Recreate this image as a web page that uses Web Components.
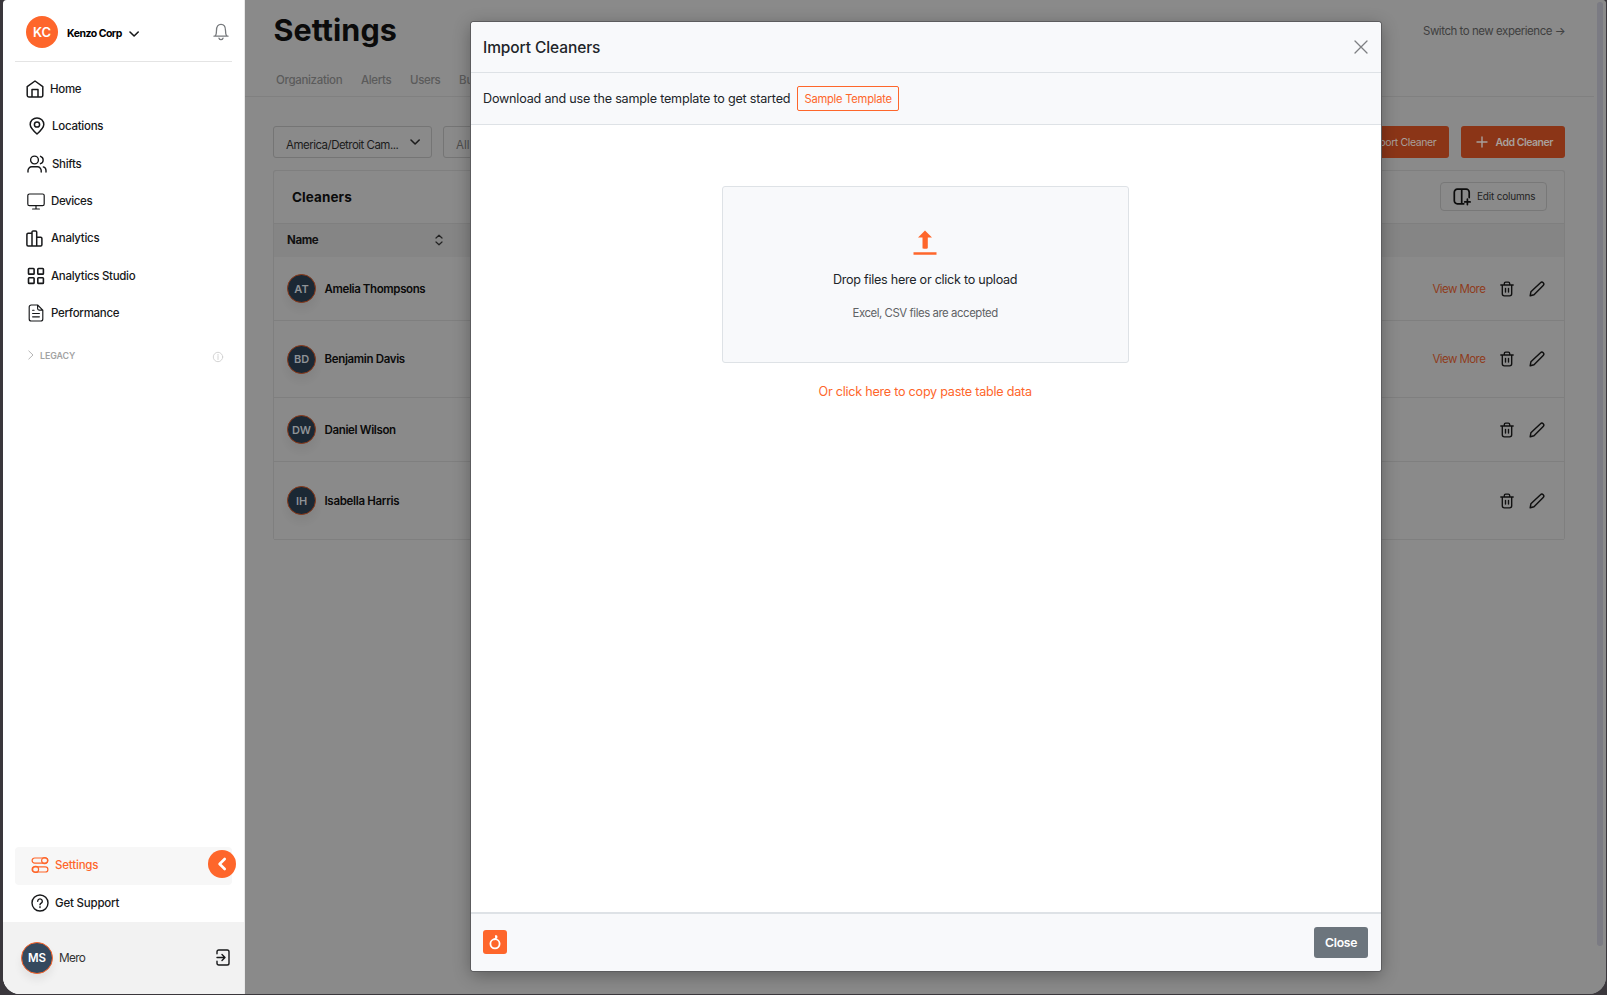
<!DOCTYPE html>
<html lang="en">
<head>
<meta charset="utf-8">
<title>Settings – Cleaners</title>
<style>
html,body{margin:0;height:100%;overflow:hidden;background:#3a373c}
body{font-family:Inter,"Liberation Sans",sans-serif;color:#17181a;font-size:11.500px}
</style>
</head>
<body>
<app-window>
  <side-bar slot="side"></side-bar>
  <settings-page></settings-page>
  <import-dialog slot="dialog"></import-dialog>
</app-window>
<script>
const define = (name, html, setup) => customElements.define(name, class extends HTMLElement {
  connectedCallback() {
    if (this.shadowRoot) return;
    const root = this.attachShadow({ mode: 'open' });
    const t = document.createElement('template');
    t.innerHTML = typeof html === 'function' ? html(this) : html;
    root.append(t.content.cloneNode(true));
    if (setup) setup(this, root);
  }
});

const ICONS = {
  home: [18,18,'<path d="M1.2 6.6 9 1l7.8 5.6v8.7a1.6 1.6 0 0 1-1.6 1.6H2.8a1.6 1.6 0 0 1-1.6-1.6zM6 16.7V9.6h6v7.1"/>',1.5],
  pin: [16,18,'<path d="M8 17C4.200 13.600 1.200 10.900 1.200 7.500a6.800 6.600 0 0 1 13.600 0C14.800 10.900 11.800 13.600 8 17z"/><circle cx="8" cy="7.500" r="2.600"/>',1.5],
  users: [20,18,'<circle cx="7.500" cy="5" r="3.900"/><path d="M1 17v-1.500a3.700 3.700 0 0 1 3.700-3.700h5.800a3.700 3.700 0 0 1 3.700 3.700V17M13.500 1.300a3.900 3.900 0 0 1 0 7.400M16.300 11.900a3.600 3.600 0 0 1 2.700 3.500V17"/>',1.4],
  monitor: [18,17,'<rect x=".8" y="1" width="16.400" height="11.600" rx="1.600"/><path d="M9 12.800v3M5.600 16h6.800"/>',1.2],
  bars: [17,17,'<path d="M.9 4.500c0-.8.5-1.200 1.200-1.200H6v12.600H2.100c-.7 0-1.200-.5-1.200-1.200zM6 2.100C6 1.300 6.500.9 7.200.9h2.300c.8 0 1.200.4 1.200 1.200v13.800H6zM10.700 7.200h4c.7 0 1.200.4 1.200 1.200v6.300c0 .7-.5 1.200-1.200 1.200h-4z"/>',1.5],
  grid: [18,18,'<rect x="1.500" y="1.500" width="5.600" height="5.600" rx=".7"/><rect x="10.800" y="1.500" width="5.600" height="5.600" rx=".7"/><rect x="1.500" y="10.800" width="5.600" height="5.600" rx=".7"/><rect x="10.800" y="10.800" width="5.600" height="5.600" rx=".7"/>',1.6],
  doc: [16,18,'<path d="M9.600 1H3.200A2 2 0 0 0 1.200 3v12a2 2 0 0 0 2 2h9.600a2 2 0 0 0 2-2V6.100zM9.600 1v3.600c0 .9.600 1.500 1.500 1.500h3.700M4.600 6.200h1.500M4.600 9.500h6.800M4.600 12.800h6.800"/>',1.15],
  bell: [16,18,'<path d="M1 13.200h14M2.300 13c1-1.300 1.200-3.400 1.200-5.600C3.500 3.500 5.200 1.400 8 1.400s4.500 2.100 4.500 6c0 2.200.2 4.300 1.200 5.600M6 15.200a2.100 2.100 0 0 0 4 0"/>',1.3],
  down: [12,8,'<path d="M2 2l4.100 4L10.200 2"/>',1.6],
  right: [8,10,'<path d="M1.800 1 6 5 1.800 9"/>',1],
  left: [10,14,'<path d="M7.700 2 2.600 7l5.100 5"/>',2.600],
  info: [12,12,'<circle cx="6" cy="6" r="4.700"/><path d="M6 5.300v3.200M6 3.400v.9"/>',.9],
  toggles: [18,18,'<rect x="1.100" y="2" width="15.800" height="5.200" rx="2.600"/><circle cx="13.600" cy="4.600" r="3"/><rect x="1.100" y="10.800" width="15.800" height="5.200" rx="2.600"/><circle cx="4.600" cy="13.400" r="3"/>',1.2],
  help: [18,18,'<circle cx="9" cy="9" r="8"/><path d="M6.700 7.200a2.300 2.300 0 1 1 3.500 2c-.8.5-1.200.8-1.200 1.500M9 12.700v.9"/>',1.4],
  logout: [14,17,'<path d="M1 4.700V2.800C1 1.700 1.700 1 2.800 1h8.400c1.100 0 1.800.7 1.800 1.800v11.400c0 1.100-.7 1.800-1.800 1.800H2.800C1.700 16 1 15.300 1 14.200v-1.900M1 8.500h7.800M6 5.500l3 3-3 3"/>',1.4],
  sort: [8,12,'<path d="M1 4 4 1.200 7 4M1 8l3 2.800L7 8"/>',1.2],
  plus: [12,12,'<path d="M6 1v10M1 6h10"/>',1.4],
  columns: [18,18,'<path d="M16.200 9.600V4.200a3 3 0 0 0-3-3H4.300a3 3 0 0 0-3 3v8.600a3 3 0 0 0 3 3h6.500M8.700 1.200v14.600M14.400 11.200v5.400M11.700 13.900h5.400"/>',1.7],
  trash: [14,16,'<path d="M.8 4h12.400M4.300 3.800V2.600c0-1 .5-1.500 1.400-1.500h2.600c.9 0 1.400.5 1.400 1.500v1.200M2.300 4.200v8.600c0 1.400.7 2.100 2.100 2.100h5.200c1.400 0 2.100-.7 2.100-2.100V4.200M5.500 7.300v3.800M8.500 7.300v3.800"/>',1.35],
  pencil: [16,16,'<path d="M1.200 14.700l.7-3.900L11.500 1.700a1.900 1.900 0 0 1 2.700 2.700L5 13.700z"/>',1.45],
  close: [14,14,'<path d="M1 1l12 12M13 1 1 13"/>',1.3],
  upload: [24,26,'<path d="M12 .4 19 7.400h-4.200v10.100c0 .8-.5 1.200-1.200 1.200h-2.900c-.8 0-1.200-.4-1.200-1.200V7.400H5zM.5 22.300h23v2.500H.5z" fill="currentColor" stroke="none"/>',1],
  mark: [24,24,'<circle cx="12" cy="13.800" r="4.600"/><path d="M11.200 9.300c1.700-.4 2.300-1.600 1.600-3.300M13.500 7.500v-1.200"/>',1.8],
};

define('ui-icon', el => {
  const [w, h, d, s] = ICONS[el.getAttribute('name')];
  return `<style>:host{display:block;flex:none;width:${w}px;height:${h}px}svg{display:block}</style>
  <svg width="${w}" height="${h}" viewBox="0 0 ${w} ${h}" fill="none" stroke="currentColor" stroke-width="${s}" stroke-linecap="round" stroke-linejoin="round">${d}</svg>`;
});

/* A single line of text whose tracking is adjusted so that it spans the width in "w". */
define('fit-text', '<style>:host{display:block;flex:none;white-space:nowrap}span{display:inline-block}</style><span><slot></slot></span>', (el, root) => {
  const s = root.querySelector('span'), w = +el.getAttribute('w'), n = el.textContent.length;
  if (!w) return;
  const gap = (w + .3 - s.getBoundingClientRect().width) / n;
  s.style.letterSpacing = gap.toFixed(3) + 'px';
  el.style.width = w + 'px';
});

define('user-avatar', `<style>:host{display:grid;place-items:center;box-sizing:border-box;flex:none;width:var(--d,32px);height:var(--d,32px);border-radius:50%;background:var(--bg,#34495e);border:var(--b,1px solid #fe662b);color:var(--fg,#fff);font-size:var(--fs,12px);font-weight:600;box-shadow:var(--sh,none)}</style><slot></slot>`);

define('nav-item', el => `<style>:host{display:flex;align-items:center;height:37.35px;font-weight:500;font-size:11.500px}
  .i{width:${el.getAttribute('tx')}px;box-sizing:border-box;padding-left:${el.getAttribute('ix')}px;flex:none}</style>
  <div class="i"><ui-icon name="${el.getAttribute('icon')}"></ui-icon></div><fit-text w="${el.getAttribute('w')}">${el.getAttribute('label')}</fit-text>`);

define('side-bar', `<style>
:host{display:flex;flex-direction:column;width:242px;height:994px;background:#fff;box-shadow:inset -1px 0 #e8e8e8}
.top{display:flex;align-items:center;margin:0 13px 0 12px;border-bottom:1px solid #e4e4e4;box-sizing:border-box;height:62px;padding:2px 3px 0 11px}
.top .n{margin:3px 6px 0 9px;font-size:10.500px;font-weight:700;color:#000}
.top .c{margin-top:5px}.top .b{margin:0 0 0 auto;color:#777a7d}
nav{padding-top:8.400px}
.leg{display:flex;align-items:center;height:20px;margin:13.500px 21px 0 24px;color:#a3a3a3}
.leg fit-text{font-size:8.800px;font-weight:600;margin-left:5px}
.leg .i{margin:4px 0 0 auto;color:#cfcfcf}.leg .r{color:#b5b5b5}
.end{margin-top:auto}
.set{display:flex;align-items:center;height:38px;margin:0 13px 0 12px;background:#f7f7f7;border-radius:4px;color:#fe662b;position:relative}
.set nav-item,.sup nav-item{margin-top:-1.500px}
.tog{position:absolute;left:193px;top:3px;width:28px;height:28px;border-radius:50%;background:#fe662b;color:#fff;display:grid;place-items:center}
.sup{margin:0 12px;height:37px;display:flex;align-items:center}
.foot{display:flex;align-items:center;height:72px;background:#f2f2f2;box-sizing:border-box;padding:0 15px 1px 18px;box-shadow:inset -1px 0 #e8e8e8}
.foot fit-text{margin-left:6px;color:#333;font-size:11.800px}
.foot .o{margin:0 0 1px auto}
</style>
<div class="top"><user-avatar style="--bg:#fe662b;--b:0;--fs:13px">KC</user-avatar><fit-text class="n" w="54.500">Kenzo Corp</fit-text><ui-icon class="c" name="down"></ui-icon><ui-icon class="b" name="bell"></ui-icon></div>
<nav>
<nav-item icon="home" ix="22.500" tx="47" w="31" label="Home"></nav-item>
<nav-item icon="pin" ix="25.500" tx="49" w="51" label="Locations"></nav-item>
<nav-item icon="users" ix="23.500" tx="49" w="29" label="Shifts"></nav-item>
<nav-item icon="monitor" ix="23.500" tx="48" w="41" label="Devices"></nav-item>
<nav-item icon="bars" ix="22.500" tx="48" w="48" label="Analytics"></nav-item>
<nav-item icon="grid" ix="23.500" tx="48" w="84" label="Analytics Studio"></nav-item>
<nav-item icon="doc" ix="24.500" tx="48" w="68" label="Performance"></nav-item>
</nav>
<div class="leg"><ui-icon class="r" name="right"></ui-icon><fit-text w="35">LEGACY</fit-text><ui-icon class="i" name="info"></ui-icon></div>
<div class="end">
<div class="set"><nav-item icon="toggles" ix="15.500" tx="40" w="43" label="Settings"></nav-item><div class="tog"><ui-icon name="left"></ui-icon></div></div>
<div class="sup"><nav-item icon="help" ix="15.500" tx="40" w="64" label="Get Support"></nav-item></div>
<div class="foot"><user-avatar style="--sh:0 6px 8px #0001;--fs:11.500px">MS</user-avatar><fit-text w="26">Mero</fit-text><ui-icon class="o" name="logout"></ui-icon></div>
</div>`);

define('cleaner-row', el => `<style>
:host{display:flex;align-items:center;box-sizing:border-box;height:${el.getAttribute('h')}px;padding:0 19px 0 13px;border-bottom:1px solid #7f7f7f;background:#8a8a8a}
user-avatar{--d:29px;--bg:#1b2834;--b:1px solid #8b3817;--fg:#8f9397;--fs:11px;--sh:0 6px 8px #0000000f}
.n{margin:0 0 0 8.500px;font-size:11.500px;font-weight:600;color:#0b0b0b}
.a{margin-left:auto;display:flex;align-items:center;color:#101010}
.a ui-icon{margin-bottom:0}
.v{color:#8f3c1c;font-size:11.500px;margin:0 15px 0 0}.a .p{margin-left:15px}
</style><user-avatar>${el.getAttribute('ini')}</user-avatar><fit-text class="n" w="${el.getAttribute('w')}">${el.getAttribute('name')}</fit-text>
<div class="a">${el.hasAttribute('more') ? '<fit-text class="v" w="52.500">View More</fit-text>' : ''}<ui-icon name="trash"></ui-icon><ui-icon class="p" name="pencil"></ui-icon></div>`);

define('settings-page', `<style>
:host{display:block;width:1361px;height:994px;background:#8a8a8a;position:relative;color:#111}
.head{height:97px;width:1349px;border-bottom:1px solid #808080;box-sizing:border-box;padding:0 29px 0 28px}
.r{display:flex;justify-content:space-between;height:60px;align-items:center}
h1{margin:0;font-size:30.500px;font-weight:700;line-height:40px;color:#0b0b0b;padding-left:.5px}
.sw{font-size:11.500px;color:#404040;margin-top:2px}
.tabs{display:flex;font-size:11.500px;font-weight:500;color:#5b5b5b;gap:19px;padding-left:3px;height:39px;align-items:center}
.tabs fit-text{margin-top:1px}
.tools{display:flex;margin:29px 29px 12px 28px;height:32px;width:1292px}
.sel{box-sizing:border-box;width:159px;height:32px;border:1px solid #757575;border-radius:3px;display:flex;align-items:center;padding:5px 10px 0 12px;margin-right:11px;font-size:11.500px;color:#1c1c1c}
.sel ui-icon{margin:-5px 0 0 auto}
.btn{height:32px;border-radius:3px;background:#8b3517;color:#a8a09c;display:flex;align-items:center;font-size:10.500px;box-sizing:border-box}
.btn fit-text{margin-top:1px}
.imp{margin-left:auto;width:112px;padding-left:31px;margin-right:12px}
.add{width:104px;padding-left:15px;font-weight:600}.add fit-text{margin-left:7.500px}
.card{box-sizing:border-box;width:1292px;margin-left:28px;border:1px solid #7f7f7f;border-radius:3px;border-bottom:0}
.ct{display:flex;align-items:center;justify-content:space-between;height:53px;box-sizing:border-box;padding:0 17px 0 18px;border-bottom:1px solid #7f7f7f}
.ct .h{font-size:13.500px;font-weight:700;color:#0b0b0b}
.ed{box-sizing:border-box;width:107px;height:29px;border:1px solid #787878;border-radius:4px;display:flex;align-items:center;padding-left:12px;margin-bottom:1px;font-size:10px;color:#222}
.ed ui-icon{color:#0c0c0c}
.ed fit-text{margin:0 0 1px 6px}
.th{display:flex;align-items:center;height:33px;background:#858585;padding:0 0 1px 13px;box-sizing:border-box;font-size:11.500px;font-weight:700}
.th ui-icon{margin-left:117px;color:#222}
.bar{position:absolute;left:1352px;top:2px;width:6px;height:944px;border-radius:3px;background:#7b7b83}
</style>
<div class="head"><div class="r"><h1><fit-text w="123">Settings</fit-text></h1><fit-text class="sw" w="142">Switch to new experience →</fit-text></div>
<div class="tabs"><fit-text w="66">Organization</fit-text><fit-text w="30">Alerts</fit-text><fit-text w="30">Users</fit-text><fit-text>Bu</fit-text></div></div>
<div class="tools"><div class="sel"><fit-text w="112">America/Detroit Cam...</fit-text><ui-icon name="down"></ui-icon></div><div class="sel" style="color:#4d4d4d">All</div>
<div class="btn imp"><fit-text w="68">Import Cleaner</fit-text></div><div class="btn add"><ui-icon name="plus"></ui-icon><fit-text w="57">Add Cleaner</fit-text></div></div>
<div class="card"><div class="ct"><fit-text class="h" w="59.500">Cleaners</fit-text><div class="ed"><ui-icon name="columns"></ui-icon><fit-text w="58">Edit columns</fit-text></div></div>
<div class="th"><fit-text w="31">Name</fit-text><ui-icon name="sort"></ui-icon></div>
<cleaner-row h="64" ini="AT" name="Amelia Thompsons" w="100.500" more></cleaner-row>
<cleaner-row h="77" ini="BD" name="Benjamin Davis" w="80" more></cleaner-row>
<cleaner-row h="64" ini="DW" name="Daniel Wilson" w="71"></cleaner-row>
<cleaner-row h="78" ini="IH" name="Isabella Harris" w="74.500"></cleaner-row></div>
<div class="bar"></div>`);

define('import-dialog', `<style>
:host{display:flex;flex-direction:column;box-sizing:border-box;width:910px;height:949px;background:#fff;border-radius:3px;overflow:hidden;box-shadow:0 0 0 1px #5c5c5e,0 4px 18px #0005;color:#212529}
.h{height:51px;display:flex;align-items:center;justify-content:space-between;box-sizing:border-box;background:#f8f9fb;border-bottom:1px solid #dee2e6;padding:0 13px 0 12px}
.h fit-text{font-size:15.500px;font-weight:500}.h ui-icon{color:#7d7f82}
.s{height:52px;display:flex;align-items:center;box-sizing:border-box;background:#f8f9fb;border-bottom:1px solid #dee2e6;padding-left:12px;font-size:12.600px}
.sb{box-sizing:border-box;width:102px;height:25px;border:1px solid #fe662b;border-radius:2px;color:#fe662b;font-size:11.200px;display:grid;place-items:center;margin-left:7px}
.b{flex:1;display:flex;flex-direction:column;align-items:center;padding:61px 2px 0 0}
.z{box-sizing:border-box;width:407px;height:177px;border:1px solid #dee2e6;border-radius:3px;background:#f8f9fb;display:flex;flex-direction:column;align-items:center;padding-top:43px}
.z ui-icon{color:#fe662b}.z .a{font-size:12.600px;line-height:20px;margin-top:14px}.z .c{font-size:11.400px;line-height:18px;margin-top:14px;color:#5f6265}
.l{color:#fe662b;font-size:12.600px;line-height:20px;margin-top:18.500px}
.f{display:flex;align-items:center;justify-content:space-between;background:#f8f9fb;border-top:2px solid #dee2e6;box-sizing:border-box;padding:0 13px 0 12px;height:59px}
.m{width:24px;height:24px;border-radius:3px;background:#fe662b;color:#fff;margin-bottom:1px}
.x{width:54px;height:31px;border-radius:3px;background:#6c757d;color:#fff;display:grid;place-items:center;font-size:12.200px;font-weight:600}
</style>
<div class="h"><fit-text w="117">Import Cleaners</fit-text><ui-icon name="close"></ui-icon></div>
<div class="s"><fit-text w="307">Download and use the sample template to get started</fit-text><div class="sb"><fit-text w="87">Sample Template</fit-text></div></div>
<div class="b"><div class="z"><ui-icon name="upload"></ui-icon><fit-text class="a" w="184">Drop files here or click to upload</fit-text><fit-text class="c" w="145">Excel, CSV files are accepted</fit-text></div>
<fit-text class="l" w="213">Or click here to copy paste table data</fit-text></div>
<div class="f"><div class="m"><ui-icon name="mark"></ui-icon></div><div class="x"><fit-text w="32">Close</fit-text></div></div>`);

define('app-window', `<style>
:host{display:flex;position:relative;width:1603px;height:994px;margin-left:3px;border-radius:4px 4px 17px 17px;overflow:hidden;background:#8a8a8a}
.d{position:absolute;left:468px;top:22px}
</style><slot name="side"></slot><slot></slot><div class="d"><slot name="dialog"></slot></div>`);
</script>
</body>
</html>
